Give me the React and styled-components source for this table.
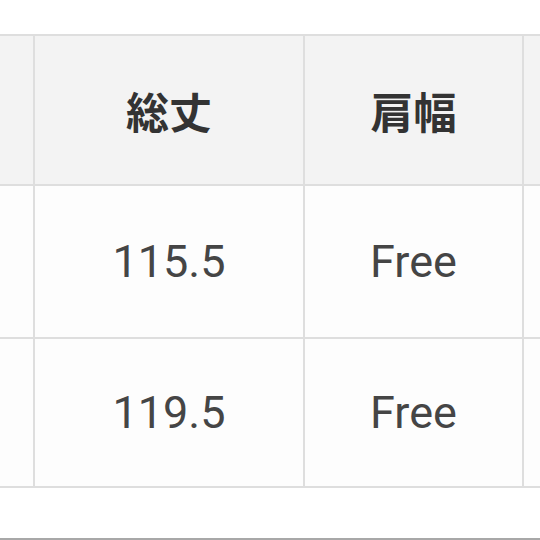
import React from 'react'
import styled, { createGlobalStyle } from 'styled-components'

const GlobalStyle = createGlobalStyle`
    html, body {
        margin: 0;
        padding: 0;
        background: #ffffff;
    }
    body {
        width: 540px;
        height: 540px;
        overflow: hidden;
        font-family: Roboto, "Noto Sans CJK JP", sans-serif;
    }
`

// 左右の列は画面外にはみ出しているので中身は空
const columns = ['', '総丈', '肩幅', '']
const rows = [
    ['', '115.5', 'Free', ''],
    ['', '119.5', 'Free', ''],
]

const App = () => {
    return (
        <>
            <GlobalStyle />
            <Page>
                <TableWrap>
                    <SizeTable>
                        {columns.map((c, i) => (
                            <HeadCell key={`h-${i}`}>{c}</HeadCell>
                        ))}
                        {rows.map((r, i) =>
                            r.map((v, j) => <BodyCell key={`${i}-${j}`}>{v}</BodyCell>)
                        )}
                    </SizeTable>
                </TableWrap>
                <Footer />
            </Page>
        </>
    )
}

export default App

const Page = styled.div`
    width: 540px;
    height: 540px;
    display: flex;
    flex-direction: column;
    padding-top: 34px;
    box-sizing: border-box;
    overflow: hidden;
`

const TableWrap = styled.div`
    width: 540px;
    overflow: hidden;
`

const SizeTable = styled.div`
    display: grid;
    grid-template-columns: 200px 268px 217px 200px;
    grid-template-rows: 148px 151px 147px;
    gap: 2px;
    padding: 2px 0;
    margin-left: -167px;
    width: max-content;
    background: #dedede;
`

const HeadCell = styled.div`
    display: flex;
    align-items: center;
    justify-content: center;
    background: #f3f3f3;
    color: #333333;
    font-family: "Noto Sans CJK JP", sans-serif;
    font-weight: 700;
    font-size: 43px;
`

const BodyCell = styled.div`
    display: flex;
    align-items: center;
    justify-content: center;
    background: #fdfdfd;
    color: #454545;
    font-family: Roboto, sans-serif;
    font-size: 45px;
`

const Footer = styled.div`
    flex: 1;
    border-bottom: 2px solid #a8a8a8;
`
